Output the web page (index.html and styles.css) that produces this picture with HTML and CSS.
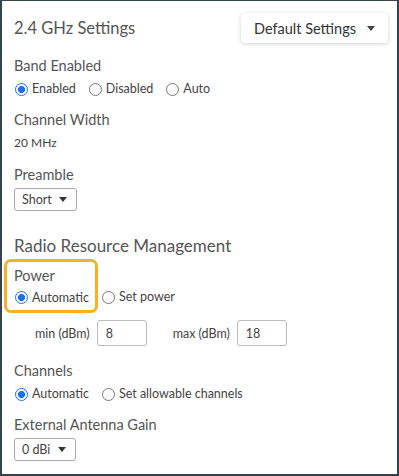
FILE: index.html
```html
<!DOCTYPE html>
<html>
<head>
<meta charset="utf-8">
<link rel="stylesheet" href="styles.css">
</head>
<body>
<div class="frame">
  <div class="header">
    <h1 class="title">2.4 GHz Settings</h1>
    <button class="defaults">Default Settings <span class="caret"></span></button>
  </div>

  <div class="field f-band">
    <div class="label">Band Enabled</div>
    <div class="radios r-band">
      <label class="radio"><span class="dot on"></span>Enabled</label>
      <label class="radio"><span class="dot"></span>Disabled</label>
      <label class="radio"><span class="dot"></span>Auto</label>
    </div>
  </div>

  <div class="field f-width">
    <div class="label">Channel Width</div>
    <div class="value">20 MHz</div>
  </div>

  <div class="field f-pre">
    <div class="label">Preamble</div>
    <div class="select s-short">Short <span class="caret small"></span></div>
  </div>

  <h2 class="section">Radio Resource Management</h2>

  <div class="power-row">
    <div class="highlight">
      <div class="label">Power</div>
      <div class="radios">
        <label class="radio"><span class="dot on"></span>Automatic</label>
      </div>
    </div>
    <label class="radio setpower"><span class="dot"></span>Set power</label>
  </div>

  <div class="minmax">
    <span class="mm-label">min (dBm)</span>
    <div class="input">8</div>
    <span class="mm-label mm-max">max (dBm)</span>
    <div class="input">18</div>
  </div>

  <div class="field f-chan">
    <div class="label">Channels</div>
    <div class="radios r-chan">
      <label class="radio"><span class="dot on"></span>Automatic</label>
      <label class="radio"><span class="dot"></span>Set allowable channels</label>
    </div>
  </div>

  <div class="field f-ant">
    <div class="label">External Antenna Gain</div>
    <div class="select s-dbi">0 dBi <span class="caret small"></span></div>
  </div>
</div>
</body>
</html>
```

FILE: styles.css
```css
* { box-sizing: border-box; }
html, body { margin: 0; padding: 0; }
body {
  width: 399px;
  height: 476px;
  font-family: Lato, "Open Sans", "Liberation Sans", sans-serif;
  color: #555;
  background: #fff;
  overflow: hidden;
}
.frame {
  width: 399px;
  height: 476px;
  border: 2px solid #34444c;
  border-top-width: 1px;
  padding: 0 0 0 12px;
  background: #fff;
}
.header {
  display: flex;
  align-items: flex-start;
  justify-content: space-between;
  padding-top: 12px;
  padding-right: 9px;
}
.title {
  margin: 3px 0 0 0;
  font-size: 16.5px;
  font-weight: 400;
  line-height: 24px;
  color: #555;
}
.defaults {
  width: 147px;
  height: 30px;
  border: none;
  border-radius: 4px;
  background: #fff;
  box-shadow: 0 1px 4px rgba(0,0,0,0.18);
  font-family: inherit;
  font-size: 14.5px;
  color: #333;
  display: flex;
  align-items: center;
  justify-content: space-between;
  padding: 0 13px 0 13px;
}
.caret {
  display: inline-block;
  width: 0; height: 0;
  border-left: 4.5px solid transparent;
  border-right: 4.5px solid transparent;
  border-top: 5px solid #444;
}
.caret.small {
  border-top-color: #333;
}
.label {
  font-size: 14.5px;
  line-height: 20px;
  color: #555;
}
.f-band { margin-top: 13px; }
.radios { display: flex; margin-top: 4px; }
.radio {
  display: inline-flex;
  align-items: center;
  font-size: 12.5px;
  line-height: 18px;
  color: #444;
}
.dot {
  width: 13px; height: 13px;
  border-radius: 50%;
  border: 1px solid #777;
  margin: 0 4px 0 1px;
  background: #fff;
  flex: none;
}
.dot.on {
  border: 1.5px solid #1a6ff5;
  background: radial-gradient(circle, #1a6ff5 0 3.3px, #fff 3.8px);
}
.r-band { gap: 12px; }
.f-width { margin-top: 12px; }
.value { font-size: 12px; line-height: 18px; margin-top: 4px; color: #444; }
.f-pre { margin-top: 13px; }
.select {
  margin-top: 3px;
  height: 23px;
  border: 1px solid #aaa;
  border-radius: 3px;
  display: flex;
  align-items: center;
  justify-content: space-between;
  padding: 0 9px 0 7px;
  font-size: 12.5px;
  color: #444;
}
.s-short { width: 63px; }
.s-dbi { width: 62px; }
.section {
  margin: 24px 0 0 0;
  font-size: 17px;
  font-weight: 400;
  line-height: 22px;
  color: #555;
}
.power-row {
  display: flex;
  align-items: flex-end;
  margin-top: 2px;
  margin-left: -10px;
}
.highlight {
  border: 3.5px solid #f6b02a;
  border-radius: 7px;
  padding: 3.5px 4px 3.5px 7px;
  width: 94px;
}
.highlight .radios { margin-top: 3px; }
.setpower { margin-left: 3px; margin-bottom: 7px; }
.minmax {
  display: flex;
  align-items: center;
  margin-top: 7px;
  padding-left: 21px;
}
.mm-label { font-size: 12.5px; color: #444; margin-right: 7px; }
.mm-max { margin-left: 26px; }
.input {
  width: 50px;
  height: 26px;
  border: 1px solid #bbb;
  border-radius: 3px;
  font-size: 12.5px;
  color: #444;
  display: flex;
  align-items: center;
  padding-left: 8px;
}
.f-chan { margin-top: 15px; }
.r-chan { gap: 12px; }
.f-ant { margin-top: 12px; }
```
